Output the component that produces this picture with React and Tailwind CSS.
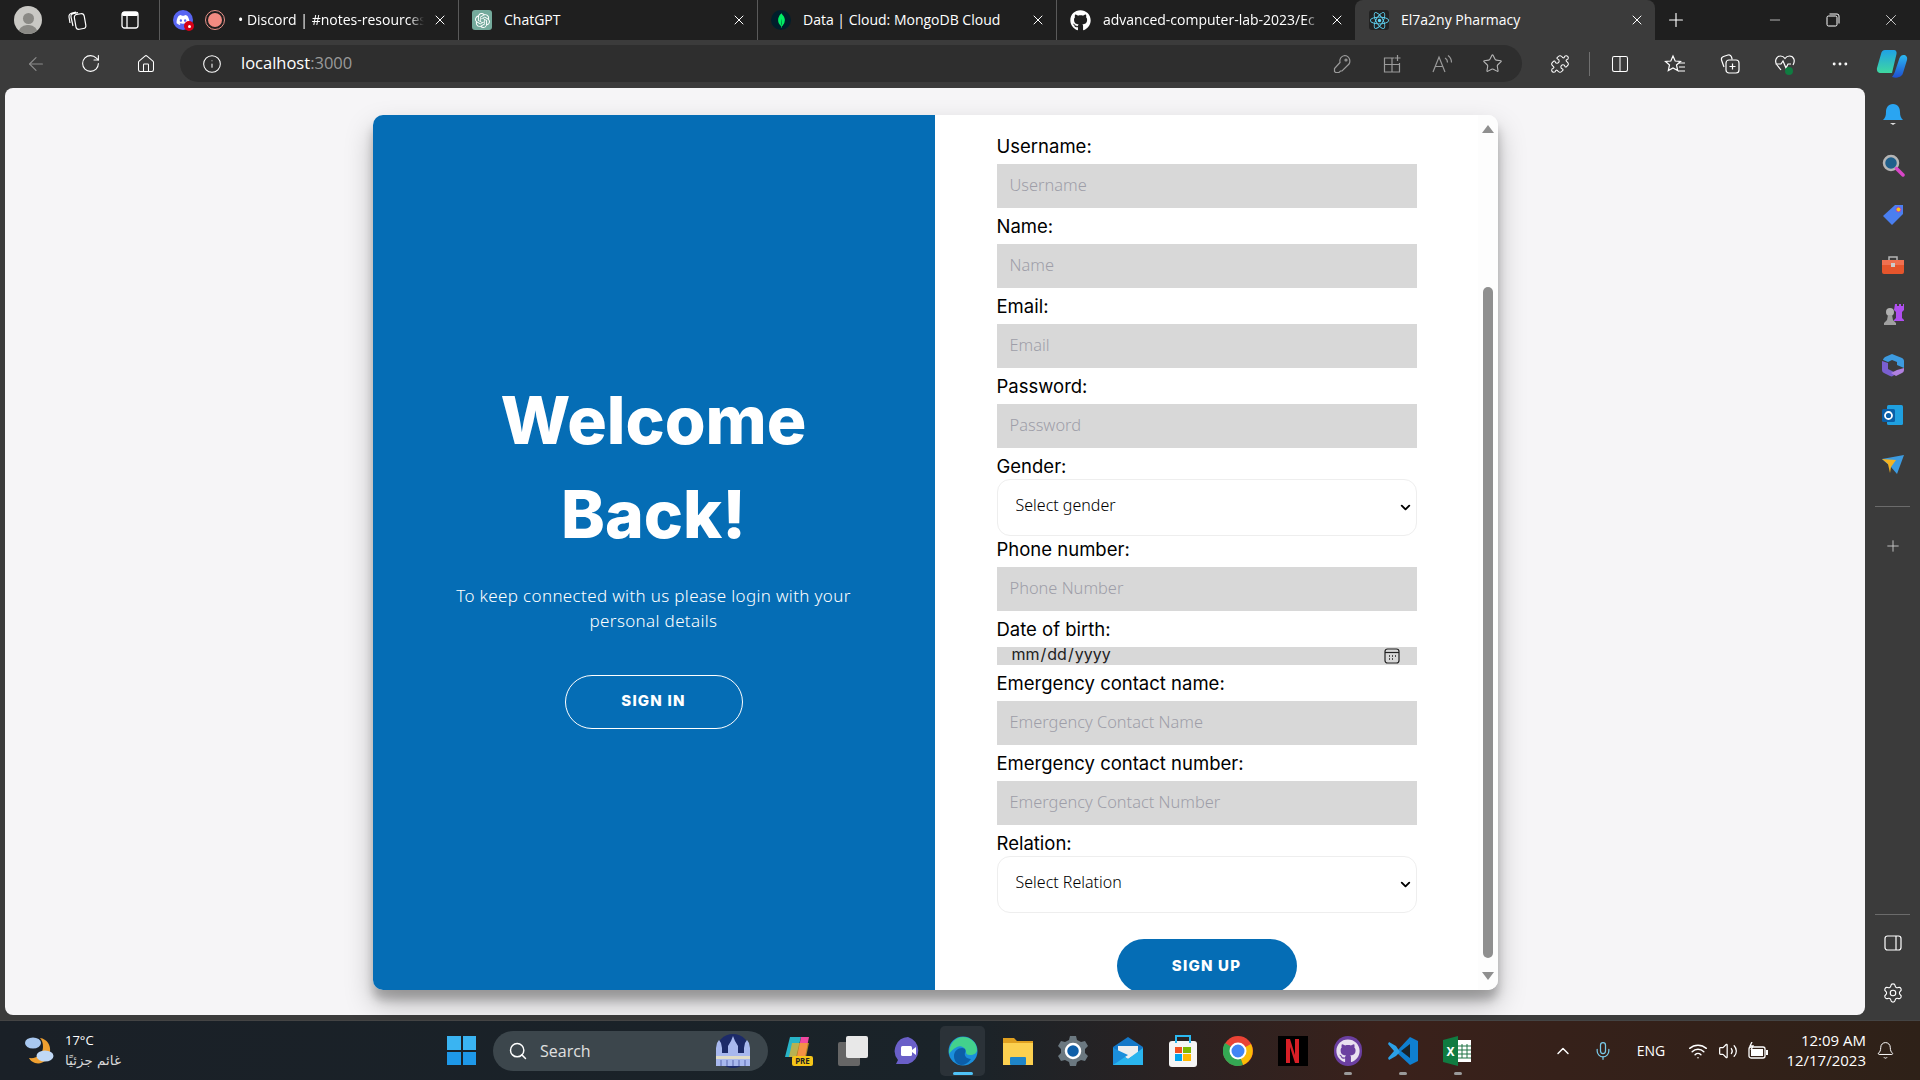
import React from 'react';
import {
  ArrowLeft, RotateCw, Home, Info, Star, Puzzle, Columns2, Plus, Minus, X, Ellipsis,
  Bell, Search, Settings, Mic, Wifi, Volume2, ChevronUp, ChevronDown,
} from 'lucide-react';
import { FaDiscord, FaGithub, FaReact } from 'react-icons/fa';
import { SiOpenai, SiMongodb } from 'react-icons/si';

const poppins = 'font-["Inter",sans-serif]';
const hind = 'font-["Noto_Sans",sans-serif]';
const ui = 'font-["Open_Sans",sans-serif]';
const fade = '[mask-image:linear-gradient(90deg,#000_92%,transparent)]';

const fields = [
  { label: 'Username:', placeholder: 'Username' },
  { label: 'Name:', placeholder: 'Name' },
  { label: 'Email:', placeholder: 'Email' },
  { label: 'Password:', placeholder: 'Password' },
  { label: 'Gender:', select: 'Select gender' },
  { label: 'Phone number:', placeholder: 'Phone Number' },
  { label: 'Date of birth:', date: true },
  { label: 'Emergency contact name:', placeholder: 'Emergency Contact Name' },
  { label: 'Emergency contact number:', placeholder: 'Emergency Contact Number' },
  { label: 'Relation:', select: 'Select Relation' },
];

function Tab({ icon, title, active, clip }) {
  return (
    <div className={active
      ? 'w-[300px] h-full flex items-center pl-[14px] pr-[10px] bg-[#3b3b3b] rounded-t-lg'
      : 'w-[299px] h-full flex items-center pl-[13px] pr-[10px] border-l border-[#5a5a5a]'}>
      {icon}
      <span className={`flex-1 ml-3 pb-[2px] overflow-hidden whitespace-nowrap text-[14px] text-white ${ui} ${clip ? fade : ''}`}>{title}</span>
      <X size={16} strokeWidth={1.5} className="text-white shrink-0 ml-2" />
    </div>
  );
}

function TabStrip() {
  return (
    <div className="h-10 bg-[#1f1f1f] flex items-center shrink-0">
      <div className="w-[54px] flex justify-center pl-[2px]">
        <div className="w-7 h-7 rounded-full bg-[#c9c8c4] flex flex-col items-center justify-end overflow-hidden">
          <div className="w-[11px] h-[11px] rounded-full bg-[#8a8985] mb-[1px]" />
          <div className="w-[20px] h-[9px] rounded-t-full bg-[#8a8985]" />
        </div>
      </div>
      <div className="w-[46px] flex justify-center">
        <svg width="22" height="22" viewBox="0 0 22 22" fill="none" stroke="#fff" strokeWidth="1.2">
          <rect x="9" y="5" width="10" height="15" rx="3" transform="rotate(-10 14 12)" />
          <path d="M7 17 5 8c-.3-1.500.5-3 2-3.300l5-1M4 14 3 8c-.2-2 1-3.500 3-4l4-1" />
        </svg>
      </div>
      <div className="w-[59px] flex justify-center">
        <svg width="20" height="20" viewBox="0 0 20 20" fill="none" stroke="#fff" strokeWidth="1.3">
          <rect x="2" y="2" width="16" height="16" rx="2.5" />
          <path d="M7 6v12" />
          <rect x="2" y="2" width="16" height="4" fill="#fff" stroke="none" rx="1.5" />
        </svg>
      </div>
      <div className="flex h-full">
        <div className="w-[299px] h-full flex items-center pl-[13px] pr-[10px] border-l border-[#5a5a5a]">
          <div className="w-5 h-5 rounded-full bg-[#5865f2] flex items-center justify-center relative shrink-0">
            <FaDiscord size={14} color="#fff" />
            <div className="absolute -right-[1px] -bottom-[1px] w-[10px] h-[10px] rounded-full bg-[#d70015] flex items-center justify-center">
              <div className="w-[3px] h-[3px] rounded-full bg-white" />
            </div>
          </div>
          <div className="w-5 h-5 rounded-full border border-[#e8928a] bg-[#1f1f1f] flex items-center justify-center shrink-0 ml-[12px]">
            <div className="w-[14px] h-[14px] rounded-full bg-[#f28b82]" />
          </div>
          <span className={`flex-1 ml-[13px] pb-[2px] overflow-hidden whitespace-nowrap text-[14px] text-white ${ui} ${fade}`}>• Discord | #notes-resources</span>
          <X size={16} strokeWidth={1.5} className="text-white shrink-0 ml-2" />
        </div>
        <Tab
          icon={<div className="w-5 h-5 rounded-[3px] bg-[#74aa9c] flex items-center justify-center shrink-0"><SiOpenai size={15} color="#fff" /></div>}
          title="ChatGPT"
        />
        <Tab
          icon={<div className="w-5 h-5 rounded-full bg-[#001e2b] flex items-center justify-center shrink-0"><SiMongodb size={15} color="#00ed64" /></div>}
          title="Data | Cloud: MongoDB Cloud"
        />
        <Tab
          clip
          icon={<FaGithub size={21} color="#fff" className="shrink-0" />}
          title="advanced-computer-lab-2023/Ec"
        />
        <Tab
          active
          icon={<div className="w-5 h-5 rounded-[3px] bg-[#222] flex items-center justify-center shrink-0"><FaReact size={19} color="#61dafb" /></div>}
          title="El7a2ny Pharmacy"
        />
      </div>
      <div className="w-[42px] flex justify-center">
        <Plus size={22} strokeWidth={1.25} className="text-white" />
      </div>
      <div className="ml-auto flex items-center">
        <div className="w-[58px] flex justify-center"><Minus size={16} strokeWidth={1} className="text-white" /></div>
        <div className="w-[58px] flex justify-center">
          <svg width="14" height="14" viewBox="0 0 14 14" fill="none" stroke="#fff" strokeWidth="1">
            <rect x="1" y="3" width="10" height="10" rx="1.5" />
            <path d="M3.500 1h7.500a2 2 0 0 1 2 2v7.500" />
          </svg>
        </div>
        <div className="w-[58px] flex justify-center"><X size={18} strokeWidth={1} className="text-white" /></div>
      </div>
    </div>
  );
}

function ToolSlot({ w = 'w-[55px]', children }) {
  return <div className={`${w} flex justify-center items-center shrink-0`}>{children}</div>;
}

function Toolbar() {
  return (
    <div className="h-12 bg-[#3b3b3b] flex items-start pt-[5px] pl-[8px] shrink-0">
      <div className="h-[37px] flex items-center">
        <ToolSlot><ArrowLeft size={22} strokeWidth={1.25} className="text-[#8b8b8b]" /></ToolSlot>
        <ToolSlot><RotateCw size={21} strokeWidth={1.25} className="text-white" /></ToolSlot>
        <ToolSlot><Home size={20} strokeWidth={1.25} className="text-white" /></ToolSlot>
      </div>
      <div className="ml-[7px] w-[1342px] h-[37px] rounded-full bg-[#2e2e2e] flex items-center pl-[22px] pr-[5px]">
        <Info size={20} strokeWidth={1.25} className="text-white" />
        <span className={`ml-[19px] text-[16.5px] ${ui} text-white`}>localhost<span className="text-[#9a9a9a]">:3000</span></span>
        <div className="ml-auto flex items-center">
          <ToolSlot w="w-[50px]">
            <svg width="20" height="20" viewBox="0 0 20 20" fill="none" stroke="#9a9a9a" strokeWidth="1.2">
              <path d="M12.500 1.500a5.500 5.500 0 0 1 3 10L10 17l-1.500 0-1.500 1.500H3.500L2.500 17.500V14.500L8 8.500a5.500 5.500 0 0 1 4.500-7z" />
              <circle cx="14" cy="6" r="1" />
            </svg>
          </ToolSlot>
          <ToolSlot w="w-[50px]">
            <svg width="20" height="20" viewBox="0 0 20 20" fill="none" stroke="#9a9a9a" strokeWidth="1.2">
              <path d="M12 4H2.500v14h15V9M2.500 10.500h15M10 4v14M15.500 1v6M12.500 4h6" />
            </svg>
          </ToolSlot>
          <ToolSlot w="w-[50px]">
            <svg width="22" height="20" viewBox="0 0 22 20" fill="none" stroke="#9a9a9a" strokeWidth="1.2">
              <path d="M2 18 8 3l6 15M4.500 12.500h7M14 4c1.500.8 2.500 2.500 2.500 4.500M17 1.500c2 1.500 3.500 4 3.500 7" />
            </svg>
          </ToolSlot>
          <ToolSlot w="w-[50px]"><Star size={21} strokeWidth={1.25} className="text-[#b5b5b5]" /></ToolSlot>
        </div>
      </div>
      <div className="ml-[10px] h-[37px] flex items-center">
        <ToolSlot><Puzzle size={20} strokeWidth={1.25} className="text-white" /></ToolSlot>
        <div className="w-px h-6 bg-[#707070] mx-[2px]" />
        <ToolSlot><Columns2 size={20} strokeWidth={1.25} className="text-white" /></ToolSlot>
        <ToolSlot>
          <svg width="22" height="20" viewBox="0 0 22 20" fill="none" stroke="#fff" strokeWidth="1.2">
            <path d="M9 2l2.200 5 5.300.5-4 3.500 1.200 5.500L9 14l-4.700 2.500L5.500 11l-4-3.500L6.800 7z" />
            <path d="M15 9h6M15 13h6M14 17h7" />
          </svg>
        </ToolSlot>
        <ToolSlot>
          <svg width="22" height="22" viewBox="0 0 22 22" fill="none" stroke="#fff" strokeWidth="1.2">
            <rect x="7" y="7" width="13" height="13" rx="3" />
            <path d="M13.500 10.500v6M10.500 13.500h6M5 14 2.500 7a3 3 0 0 1 2-3.500L9 2c1.500-.4 3 .4 3.500 2l.7 2.500" />
          </svg>
        </ToolSlot>
        <ToolSlot>
          <svg width="22" height="22" viewBox="0 0 22 22" fill="none">
            <path d="M7 17 3 12c-3-4-.5-9 3.500-9C8.500 3 10 4 11 5.500 12 4 13.500 3 15.500 3 20 3 21.500 8 19 12M1.500 11H7l2 -3 3 7 2-4h3" stroke="#fff" strokeWidth="1.2" />
            <circle cx="15" cy="18" r="4" fill="#107c41" />
          </svg>
        </ToolSlot>
        <ToolSlot><Ellipsis size={20} strokeWidth={1.5} className="text-white" /></ToolSlot>
        <ToolSlot w="w-[50px]">
          <svg width="32" height="30" viewBox="0 0 32 30">
            <defs>
              <linearGradient id="cp1" x1="0" y1="0" x2="0" y2="1"><stop offset="0" stopColor="#1fa2e6" /><stop offset="1" stopColor="#3fd8a0" /></linearGradient>
              <linearGradient id="cp2" x1="0" y1="0" x2="0" y2="1"><stop offset="0" stopColor="#2bb8f0" /><stop offset="1" stopColor="#1f4fd0" /></linearGradient>
            </defs>
            <path d="M9 1h9c2 0 3 2 2.500 4L16 24H5c-3 0-4.500-2-4-5L5 5c.5-2.500 2-4 4-4z" fill="url(#cp1)" />
            <path d="M16 28c3 1 5 1 7 0 2-.6 3.500-2 4-4l4-13c.8-3-1-5-3.500-5-2 0-3 1-4 3l-4 12c-.8 3-2 5-3.500 7z" fill="url(#cp2)" />
          </svg>
        </ToolSlot>
      </div>
    </div>
  );
}

function Field({ field, index }) {
  const isSelect = !!field.select;
  const afterSelect = index > 0 && fields[index - 1].select;
  return (
    <div>
      <label className={`block h-[26px] leading-[26px] text-[18.5px] text-black ${poppins} ${afterSelect ? '' : 'mt-[5px]'} ${isSelect ? '' : 'mb-[5px]'}`}>
        {field.label}
      </label>
      {isSelect && (
        <div className="relative w-[420px]">
          <select defaultValue="" className={`block appearance-none w-full h-[57px] bg-white border border-[#eeeeee] rounded-[13px] pl-[18px] pb-[6px] text-[16px] font-light text-black ${hind}`}>
            <option value="">{field.select}</option>
          </select>
          <ChevronDown size={15} strokeWidth={3} className="absolute right-[4px] top-[21px] text-black pointer-events-none" />
        </div>
      )}
      {field.date && (
        <div className="relative w-[420px]">
          <input type="date" className={`block w-full h-[18px] bg-[#d8d8d8] pl-[14px] pr-[14px] pb-[4px] text-[16px] text-[#222] [&::-webkit-calendar-picker-indicator]:opacity-0 ${poppins}`} />
          <svg width="16" height="16" viewBox="0 0 16 16" fill="none" stroke="#222" strokeWidth="1.2" className="absolute right-[17px] top-[1px] pointer-events-none">
            <rect x="1" y="1" width="14" height="14" rx="2.5" />
            <path d="M1 4.500h14" />
            <path d="M5 8h1M8 8h1M11 8h1M5 11h1M8 11h1" strokeWidth="1.5" />
          </svg>
        </div>
      )}
      {field.placeholder && (
        <input
          placeholder={field.placeholder}
          className={`block w-[420px] h-[44px] bg-[#d8d8d8] pl-[13px] pb-[4px] text-[16.4px] font-light outline-none placeholder:text-[#9e9ea8] ${hind}`}
        />
      )}
    </div>
  );
}

function LoginCard() {
  return (
    <div className="w-[1125px] h-[875px] mt-[2px] rounded-[10px] overflow-hidden flex bg-white shadow-[0_14px_28px_rgba(0,0,0,0.25),0_10px_10px_rgba(0,0,0,0.22)]">
      <div className="w-[562px] pb-[4px] bg-[#056db5] flex flex-col items-center justify-center text-white">
        <h1 className={`text-[66px] leading-[94px] font-extrabold text-center ${poppins}`}>Welcome<br />Back!</h1>
        <p className={`mt-[22px] w-[420px] text-[17px] leading-[25px] font-light tracking-[0.35px] text-center ${hind}`}>
          To keep connected with us please login with your personal details
        </p>
        <button className={`mt-[42px] w-[178px] h-[54px] rounded-[27px] border border-white text-[15px] font-extrabold tracking-[1.2px] text-white ${poppins}`}>SIGN IN</button>
      </div>
      <div className="flex-1 flex min-w-0">
        <form className="flex-1 pl-[62px] pt-[13px]">
          {fields.map((f, i) => <Field key={f.label} field={f} index={i} />)}
          <div className="w-[420px] flex justify-center mt-[26px]">
            <button type="button" className={`w-[180px] h-[54px] shrink-0 rounded-[27px] bg-[#056db5] text-white text-[15px] font-extrabold tracking-[1.2px] ${poppins}`}>SIGN UP</button>
          </div>
        </form>
        <div className="w-5 bg-[#fdfdfd] flex flex-col items-center pt-[10px]">
          <div className="w-0 h-0 border-x-[6px] border-x-transparent border-b-[8px] border-b-[#8f8f8f]" />
          <div className="w-[10px] h-[671px] mt-[154px] rounded-[5px] bg-[#8f8f8f]" />
          <div className="w-0 h-0 mt-[14px] border-x-[6px] border-x-transparent border-t-[8px] border-t-[#8f8f8f]" />
        </div>
      </div>
    </div>
  );
}

function Sidebar() {
  return (
    <div className="w-[55px] shrink-0 flex flex-col items-center pt-[15px] pb-[11px]">
      <div className="flex flex-col items-center gap-[26px]">
        <svg width="24" height="24" viewBox="0 0 24 24"><path d="M12 1c5 0 7 4 7 8 0 4 1 6 3 8H2c2-2 3-4 3-8 0-4 2-8 7-8z" fill="#2aa5f2" /><path d="M9 20h6l-3 2z" fill="#ddd" /></svg>
        <svg width="24" height="24" viewBox="0 0 24 24" fill="none"><circle cx="10" cy="10" r="7" fill="#1f5f8b" stroke="#b5b5b5" strokeWidth="2.5" /><path d="M15.500 15.500 22 22" stroke="#d946c8" strokeWidth="3.5" strokeLinecap="round" /></svg>
        <svg width="24" height="24" viewBox="0 0 24 24"><path d="M14 2h8v9L11 22 2 13z" fill="#4a7ff0" /><circle cx="17.500" cy="6.500" r="2.500" fill="#f5c518" stroke="#a03fd0" /></svg>
        <svg width="24" height="24" viewBox="0 0 24 24"><path d="M8 7V4h8v3" fill="none" stroke="#b5b5b5" strokeWidth="1.5" /><rect x="1" y="7" width="22" height="14" rx="2" fill="#e5552c" /><rect x="1" y="7" width="22" height="5" fill="#f07050" /><rect x="10" y="10" width="4" height="4" fill="#ccc" /></svg>
        <svg width="24" height="24" viewBox="0 0 24 24"><circle cx="9" cy="9" r="4" fill="#b0b0b0" /><path d="M7 12h4l1 5 3 3v2H3v-2l3-3z" fill="#a0a0a0" /><path d="M14 1h2v2h2V1h2v2h2V1h1v6l-2 2v6l2 2v1h-10v-1l2-2V9l-2-2z" fill="#b04ff0" /></svg>
        <svg width="24" height="24" viewBox="0 0 24 24">
          <path d="M11 1 21 5c1 .5 2 1.500 2 3v7l-7-3V9l-5-2-4 2L2 7c0-1 1-2 2-3z" fill="#3d9be0" />
          <path d="M1 8l6 2v6l8 4-3 3c-1 .5-2 .5-3 0L3 20c-1-.5-2-1.500-2-3z" fill="#7a5fd0" />
          <path d="M23 15v2c0 1.500-1 2.500-2 3l-6 3-5-3 6-3z" fill="#b080e0" />
        </svg>
        <svg width="24" height="24" viewBox="0 0 24 24"><rect x="6" y="2" width="16" height="20" rx="1.5" fill="#1fa0e0" /><rect x="1" y="6" width="13" height="13" rx="1.5" fill="#0a5fa8" /><circle cx="7.500" cy="12.500" r="3.500" fill="none" stroke="#fff" strokeWidth="1.8" /></svg>
        <svg width="24" height="24" viewBox="0 0 24 24"><path d="M1 6 23 2 16 21l-6-7z" fill="#3d9be0" /><path d="M1 6l14 1-5 7-1 6-2-9z" fill="#f5b320" /></svg>
      </div>
      <div className="w-[35px] h-px bg-[#6b6b6b] mt-[29px]" />
      <Plus size={18} strokeWidth={1.25} className="text-[#c8c8c8] mt-[30px]" />
      <div className="w-[35px] h-px bg-[#6b6b6b] mt-auto" />
      <svg width="18" height="16" viewBox="0 0 18 16" fill="none" stroke="#fff" strokeWidth="1.2" className="mt-[20px]">
        <rect x="1" y="1" width="16" height="14" rx="2.5" />
        <path d="M12 1v14" />
      </svg>
      <Settings size={22} strokeWidth={1.25} className="text-white mt-[31px]" />
    </div>
  );
}

function TaskIcon({ children, active, dot }) {
  return (
    <div className="w-[55px] h-[50px] flex flex-col items-center justify-center relative">
      {active && <div className="absolute inset-x-[5px] inset-y-0 bg-[#2b3238] rounded-[5px]" />}
      <div className="relative">{children}</div>
      {active && <div className="absolute bottom-[1px] w-5 h-[3px] rounded-full bg-[#4fc3f7]" />}
      {dot && <div className="absolute bottom-[1px] w-2 h-[3px] rounded-full bg-[#9a9a9a]" />}
    </div>
  );
}

function Taskbar() {
  return (
    <div className="h-[60px] border-t border-[#444] flex items-center shrink-0 bg-[linear-gradient(90deg,#1a2027_0%,#1a2329_50%,#3a211b_72%,#2e2118_100%)]">
      <div className="w-[434px] flex items-center pl-[23px]">
        <svg width="34" height="34" viewBox="0 0 34 34">
          <path d="M17 4c7 1 11 7 10 14-1 8-8 13-15 11-3-1-5-3-6-5 8 1 14-4 14-11 0-4-1-7-3-9z" fill="#f0a030" />
          <ellipse cx="10" cy="9" rx="8" ry="5.5" fill="#a8c8f0" />
          <ellipse cx="22" cy="22" rx="8.500" ry="5.500" fill="#c0d8f5" />
        </svg>
        <div className={`ml-[8px] pb-[2px] text-white ${ui}`}>
          <div className="text-[13px] leading-[20px]">17°C</div>
          <div className={`text-[13.5px] leading-[20px] text-[#d8d8d8] font-["DejaVu_Sans",sans-serif]`}>غائم جزئيًا</div>
        </div>
      </div>
      <div className="w-[55px] flex justify-center">
        <div className="grid grid-cols-2 gap-[2px] w-[29px] h-[29px]">
          <div className="bg-[#3ab4f2]" /><div className="bg-[#3ab4f2]" />
          <div className="bg-[#1e98e8]" /><div className="bg-[#1e98e8]" />
        </div>
      </div>
      <div className="ml-[4px] w-[275px] h-10 rounded-full bg-[#3c464c] flex items-center pl-[15px] pr-[10px]">
        <Search size={20} strokeWidth={1.75} className="text-white" />
        <span className={`ml-[12px] text-[16px] text-[#e0e0e0] ${ui}`}>Search</span>
        <svg width="50" height="34" viewBox="0 0 50 34" className="ml-auto">
          <circle cx="25" cy="17" r="17" fill="#1c2a68" />
          <path d="M8 32V14l1-5 2-3 2 3 1 5v5h6v-7l3-5 2-5 2 5 3 5v7h6v-5l1-5 2-3 2 3 1 5v18z" fill="#a8b8ee" />
          <rect x="8" y="22" width="34" height="3" fill="#e0dcc8" />
          <path d="M13 26v6M19 26v6M25 26v6M31 26v6M37 26v6" stroke="#5a68b0" />
        </svg>
      </div>
      <div className="ml-[2px] flex items-center">
        <TaskIcon>
          <svg width="30" height="32" viewBox="0 0 30 32">
            <path d="M7 2h11l-5 20H2z" fill="#28b4c8" />
            <path d="M18 2h8l-4 20h-8z" fill="#f048a0" />
            <path d="M9 8h17l-3 14H6z" fill="#f4b020" opacity="0.7" />
            <rect x="9" y="21" width="21" height="10" rx="2" fill="#f5c518" />
            <text x="19.5" y="29" fontSize="8" fontWeight="700" textAnchor="middle" fill="#222">PRE</text>
          </svg>
        </TaskIcon>
        <TaskIcon>
          <div className="w-[30px] h-[30px] relative">
            <div className="absolute left-0 bottom-0 w-[22px] h-[24px] bg-[#666] rounded-[2px]" />
            <div className="absolute right-0 top-0 w-[22px] h-[22px] bg-[#e8e8e8] rounded-[2px]" />
          </div>
        </TaskIcon>
        <TaskIcon>
          <svg width="30" height="30" viewBox="0 0 30 30">
            <path d="M15 1a14 14 0 0 1 0 27H3l2-4A14 14 0 0 1 15 1z" fill="#6a5fc8" />
            <rect x="8" y="10" width="11" height="10" rx="1.5" fill="#fff" />
            <path d="m19 14 4-3v8l-4-3z" fill="#fff" />
          </svg>
        </TaskIcon>
        <TaskIcon active>
          <svg width="30" height="30" viewBox="0 0 30 30">
            <circle cx="15" cy="15" r="14.5" fill="#1b8fdc" />
            <path d="M15 1c8 0 14 6 14 13 0 3-3 5-7 5-3 0-4-1-4-3 0-4-5-7-9-5C5 13 3 15 1 18 1 8 7 1 15 1z" fill="#43d18d" />
            <path d="M13 29c-5-1-7-5-7-9 0-5 4-8 8-8s4 3 3 5 1 6 6 6c-3 4-6 6-10 6z" fill="#0c5ea8" />
          </svg>
        </TaskIcon>
        <TaskIcon>
          <svg width="30" height="32" viewBox="0 0 30 32">
            <path d="M0 3h11l3 3h16v24H0z" fill="#e0a020" />
            <rect x="0" y="8" width="30" height="22" fill="#fcd050" />
            <rect x="7" y="22" width="16" height="8" rx="1" fill="#1f85c8" />
          </svg>
        </TaskIcon>
        <TaskIcon>
          <svg width="32" height="32" viewBox="0 0 32 32">
            <path d="M13 1h6l1 4 4 2 4-1 3 5-3 3v4l3 3-3 5-4-1-4 2-1 4h-6l-1-4-4-2-4 1-3-5 3-3v-4L1 11l3-5 4 1 4-2z" fill="#6b7880" />
            <circle cx="16" cy="16" r="7" fill="#0f5fa8" stroke="#fff" strokeWidth="2.5" />
          </svg>
        </TaskIcon>
        <TaskIcon>
          <svg width="32" height="32" viewBox="0 0 32 32">
            <path d="M1 12 16 2l15 10v18H1z" fill="#1478c8" />
            <path d="M6 11h20v7l-10 6-10-6z" fill="#eee" />
            <path d="M1 13v17h30V13L16 24z" fill="#2ab5ee" />
            <path d="M1 30 16 20l-15-7z" fill="#1b8fdc" />
          </svg>
        </TaskIcon>
        <TaskIcon>
          <div className="w-[28px] h-[32px] relative flex items-end">
            <div className="absolute left-[6px] top-0 w-4 h-[8px] border-2 border-b-0 border-[#2bb8f0]" />
            <div className="w-full h-[26px] rounded-[3px] bg-[#f5f5f5] grid grid-cols-2 gap-px p-[6px]">
              <div className="bg-[#f25022]" /><div className="bg-[#7fba00]" />
              <div className="bg-[#00a4ef]" /><div className="bg-[#ffb900]" />
            </div>
          </div>
        </TaskIcon>
        <TaskIcon>
          <svg width="30" height="30" viewBox="0 0 30 30">
            <circle cx="15" cy="15" r="15" fill="#ea4335" />
            <path d="M15 15 28 8a15 15 0 0 1-8 21z" fill="#fbbc05" />
            <path d="M15 15 20 29A15 15 0 0 1 2 7z" fill="#34a853" />
            <circle cx="15" cy="15" r="7.5" fill="#4285f4" stroke="#fff" strokeWidth="2" />
          </svg>
        </TaskIcon>
        <TaskIcon>
          <div className="w-[30px] h-[30px] bg-black flex justify-center items-center">
            <svg width="13" height="24" viewBox="0 0 13 24">
              <path d="M0 0h4l5 16V0h4v24H9L4 8v16H0z" fill="#d81f26" />
            </svg>
          </div>
        </TaskIcon>
        <TaskIcon dot>
          <div className="w-[28px] h-[30px] rounded-full bg-[#6b3fa0] flex items-center justify-center">
            <FaGithub size={24} color="#e8e0f0" />
          </div>
        </TaskIcon>
        <TaskIcon dot>
          <svg width="30" height="30" viewBox="0 0 30 30">
            <path d="M22 1 30 5v20l-8 4-14-13z" fill="#0f7fd0" />
            <path d="M22 8v14l-9-7z" fill="#1a2329" />
            <path d="M8 10 1 6l-1 2 6 7-6 7 1 2 7-4 4-4z" fill="#2ba0e8" />
          </svg>
        </TaskIcon>
        <TaskIcon dot>
          <svg width="30" height="30" viewBox="0 0 30 30">
            <rect x="10" y="4" width="18" height="22" fill="#fff" />
            <path d="M14 8v14M19 8v14M24 8v14M10 10h18M10 14h18M10 18h18M10 22h18" stroke="#1f7244" strokeWidth="1" />
            <path d="M0 4 15 0v30L0 26z" fill="#107c41" />
            <text x="7.5" y="20" fontSize="12" fontWeight="700" textAnchor="middle" fill="#fff">X</text>
          </svg>
        </TaskIcon>
      </div>
      <div className="ml-[60px] flex items-center text-white">
        <div className="w-9 flex justify-center"><ChevronUp size={20} strokeWidth={1.75} /></div>
        <div className="w-11 flex justify-center"><Mic size={20} strokeWidth={1.5} className="text-[#79c9e8]" /></div>
        <div className={`w-[52px] text-center text-[14px] ${ui}`}>ENG</div>
        <div className="ml-[6px] w-[30px] flex justify-center"><Wifi size={20} strokeWidth={1.75} /></div>
        <div className="w-[30px] flex justify-center"><Volume2 size={20} strokeWidth={1.5} /></div>
        <div className="w-[30px] flex justify-center">
          <svg width="22" height="18" viewBox="0 0 22 18" fill="none" stroke="#fff" strokeWidth="1.3">
            <rect x="2" y="5" width="16" height="11" rx="2" />
            <rect x="4" y="7" width="12" height="7" fill="#fff" stroke="none" />
            <path d="M20 8v5" strokeWidth="2" />
            <path d="M5 0 3 4h3L4 8" />
          </svg>
        </div>
        <div className={`w-[93px] text-right text-[15px] leading-[20px] pb-[1px] ${ui}`}>
          <div>12:09 AM</div>
          <div>12/17/2023</div>
        </div>
        <div className="pl-[10px]"><Bell size={19} strokeWidth={1.25} /></div>
      </div>
    </div>
  );
}

export default function App() {
  return (
    <div className="w-[1920px] h-screen flex flex-col overflow-hidden bg-[#3b3b3b]">
      <TabStrip />
      <Toolbar />
      <div className="flex-1 min-h-0 flex pl-[5px] pb-[5px]">
        <div className="flex-1 bg-[#f6f5f7] rounded-lg flex items-center justify-center">
          <LoginCard />
        </div>
        <Sidebar />
      </div>
      <Taskbar />
    </div>
  );
}
